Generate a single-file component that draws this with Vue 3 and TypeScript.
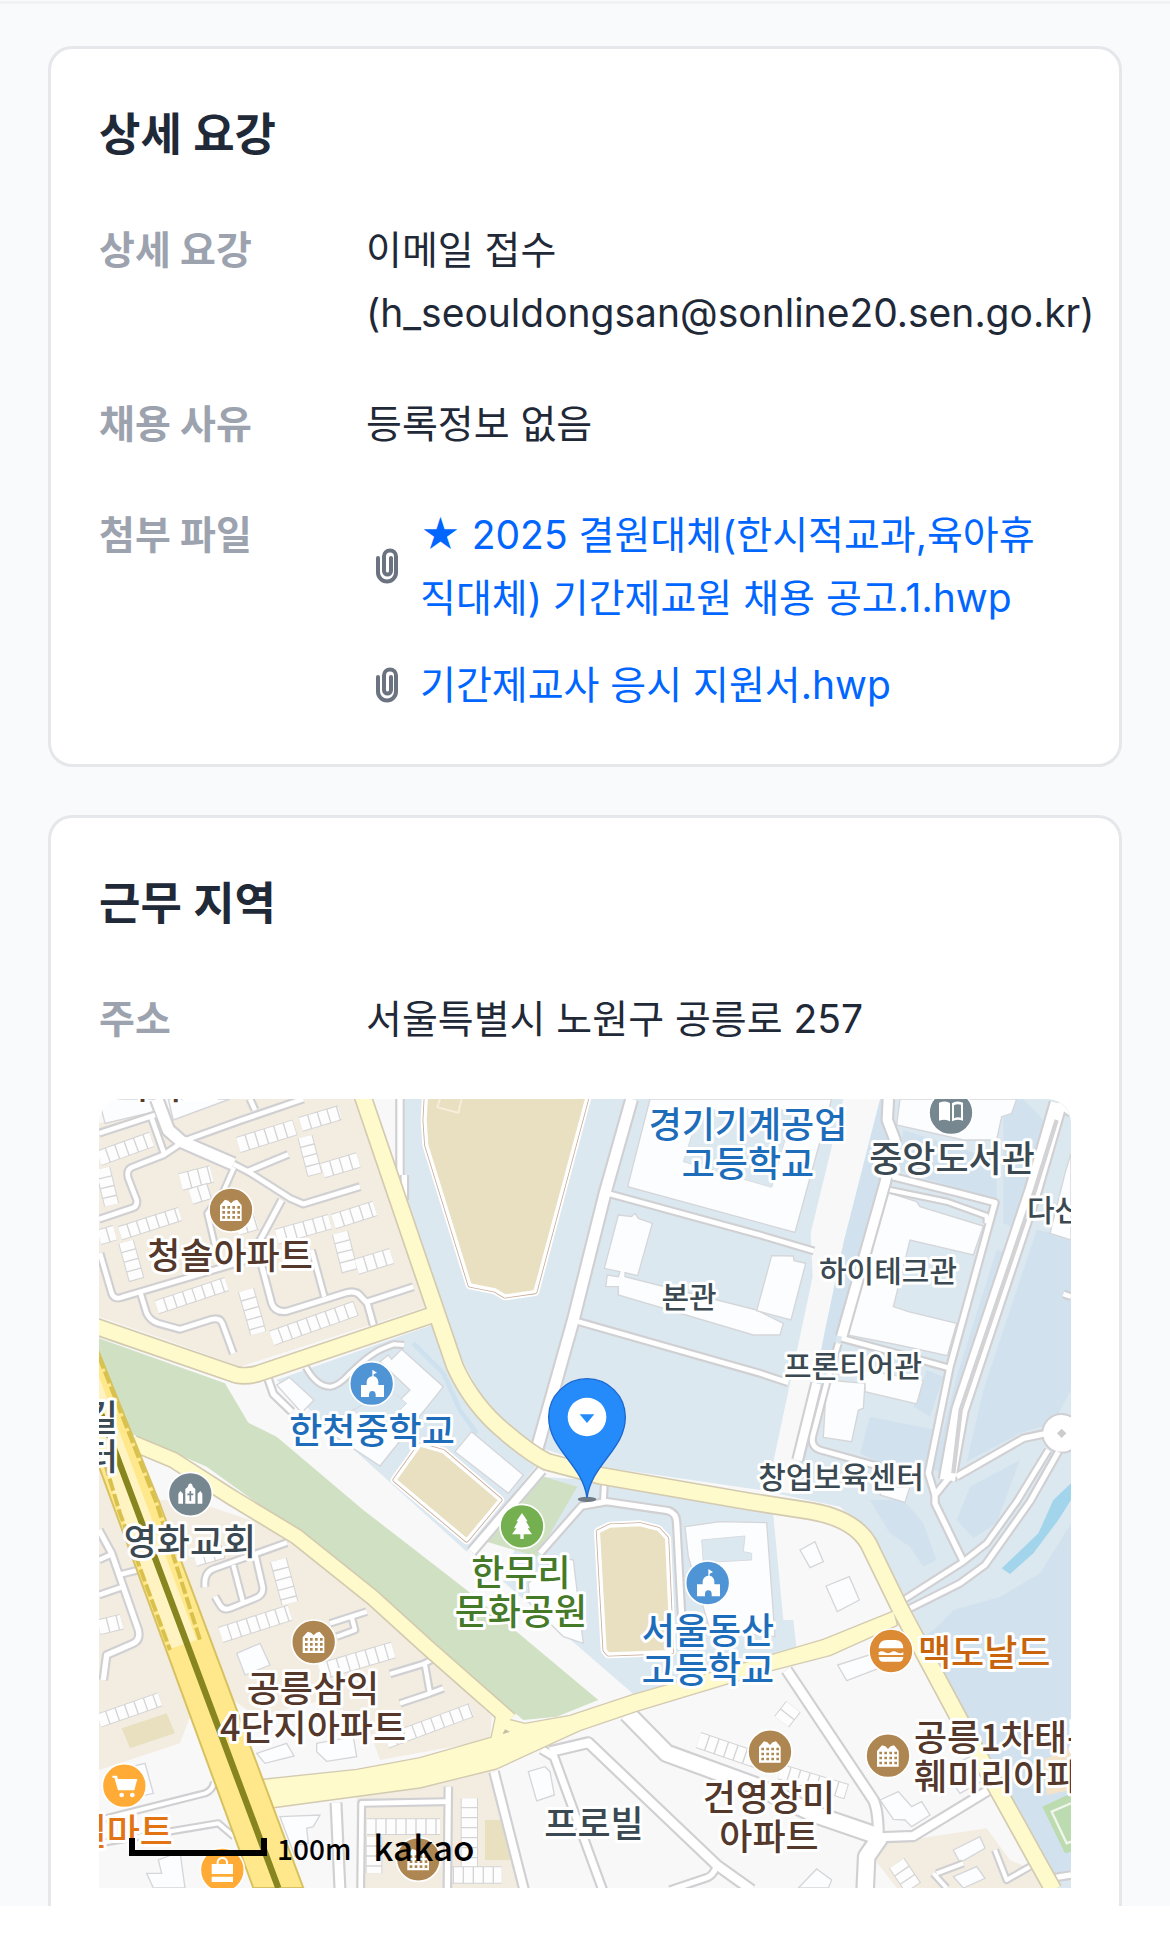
<script setup lang="ts">
type Road = { d: string; w: number }
type Poi = { kind: string; x: number; y: number; color: string }
type Label = { lines: string[]; x: number; y: number; tone: string; size?: 'small'; anchor?: 'start' | 'end' }

const files: string[] = [
  '★ 2025 결원대체(한시적교과,육아휴직대체) 기간제교원 채용 공고.1.hwp',
  '기간제교사 응시 지원서.hwp',
]

/* Minor streets, drawn with a grey casing under a white centre */
const roads: Road[] = [
  { d: 'M200 27L235 120L275 155L430 222', w: 34 },
  { d: 'M430 222L480 248L600 325L640 342L810 290', w: 14 },
  { d: 'M27 130L195 75', w: 14 },
  { d: 'M275 155L450 92L640 27', w: 14 },
  { d: 'M480 27L495 60', w: 14 },
  { d: 'M185 85L222 190', w: 14 },
  { d: 'M265 165L220 195L125 232Q108 240 115 265L140 330Q143 350 125 355L27 388', w: 14 },
  { d: 'M470 245L595 193', w: 14 },
  { d: 'M432 232L400 305L352 370L378 480', w: 12 },
  { d: 'M575 330L500 470L545 640Q555 668 590 664L770 608Q800 600 815 622L832 640L850 705', w: 15 },
  { d: 'M665 480L703 620', w: 13 },
  { d: 'M832 635L970 590', w: 14 },
  { d: 'M30 490L65 610Q72 630 95 622L480 508', w: 14 },
  { d: 'M150 605L170 670Q180 692 205 700L270 718L365 688Q390 682 397 700L430 790', w: 14 },
  { d: 'M930 27L930 255M943 255L943 330', w: 16 },
  { d: 'M535 868L550 912L605 965', w: 16 },
  { d: 'M648 832Q680 890 720 890Q745 888 775 855Q840 790 880 775L910 763L942 765', w: 12 },
  { d: 'M1355 1140L1145 1385', w: 24 },
  { d: 'M1350 1390L1475 1248L1550 1235L1735 1262Q1760 1270 1760 1300L1780 1675', w: 16 },
  { d: 'M1543 1180L1540 1240', w: 14 },
  { d: 'M1625 27L1545 310L1450 690L1340 1080', w: 32 },
  { d: 'M1560 312L2010 435L2172 483', w: 14 },
  { d: 'M1455 692L2010 850L2095 878', w: 14 },
  { d: 'M2395 27L2392 90L2415 150L2385 280L2255 740', w: 28 },
  { d: 'M2408 260L2600 308L2715 338L2580 830L2515 1150L2535 1215', w: 16 },
  { d: 'M2400 300L2570 335L2690 378L2690 400', w: 12 },
  { d: 'M2255 745L2420 790L2580 835', w: 14 },
  { d: 'M2245 760L2215 860L2168 1040Q2162 1070 2190 1080L2370 1130', w: 14 },
  { d: 'M2180 880L2123 1110', w: 26 },
  { d: 'M2905 40L2830 300L2610 960L2572 1170', w: 46 },
  { d: 'M2905 40L2943 70', w: 16 },
  { d: 'M2580 1160L2535 1215L2535 1240L2620 1415', w: 16 },
  { d: 'M2600 1160L2800 1045L2870 1030', w: 16 },
  { d: 'M2875 1080L2780 1235L2690 1360L2620 1415L2440 1530', w: 14 },
  { d: 'M2905 1085L2820 1235L2685 1425L2610 1480L2460 1555', w: 15 },
  { d: 'M2943 620L2920 612', w: 14 },
  { d: 'M1612 1870L1730 1990L1990 2085L2180 2175L2370 2240', w: 46 },
  { d: 'M2090 1740L2350 2130Q2365 2160 2365 2240', w: 26 },
  { d: 'M2365 2242L2470 2238L2700 2098', w: 24 },
  { d: 'M2370 2242L2330 2300L2325 2410', w: 46 },
  { d: 'M1212 2045L1305 2410', w: 22 },
  { d: 'M1355 1978L1392 2000L1538 2400', w: 20 },
  { d: 'M1380 1985L1495 1958L1880 2325L1985 2400', w: 26 },
  { d: 'M1880 2325Q1870 2360 1845 2365L1740 2400', w: 16 },
  { d: 'M738 2138L750 2400', w: 26 },
  { d: 'M1075 2090L1072 2400', w: 16 },
  { d: 'M812 2400L815 2140L1070 2135', w: 14 },
  { d: 'M590 1358L375 1435Q340 1445 345 1492', w: 14 },
  { d: 'M430 1425L460 1540', w: 13 },
  { d: 'M495 1390L518 1490Q522 1515 495 1525L420 1555Q400 1562 390 1545L375 1520', w: 14 },
  { d: 'M27 1320L65 1390L145 1620Q152 1650 130 1660L50 1695L40 1770', w: 16 },
  { d: 'M27 1515L100 1490M85 1455L145 1440M27 1410L60 1395', w: 14 },
  { d: 'M830 1565L720 1600M785 1580L795 1620L740 1640', w: 13 },
  { d: 'M900 1752L1000 1722L1045 1700M1005 1725L1020 1810L1060 1795M1020 1810L930 1840', w: 13 },
  { d: 'M27 2190L345 2110Q370 2100 372 2075', w: 12 },
  { d: 'M27 2260L385 2200L432 2240', w: 12 },
  { d: 'M2715 2280L2750 2370L2820 2330M2540 2350L2620 2320M2530 2350L2570 2394', w: 12 },
  { d: 'M2943 2355L2880 2365', w: 16 },
]

/* Rows of apartment units */
const rows: Road[] = [
  { d: 'M445 165L615 112', w: 44 },
  { d: 'M632 103L750 68', w: 40 },
  { d: 'M645 140L675 255', w: 40 },
  { d: 'M698 242L805 210', w: 42 },
  { d: 'M27 205L185 148', w: 42 },
  { d: 'M38 235L65 345', w: 40 },
  { d: 'M90 430L270 372', w: 38 },
  { d: 'M108 455L140 570', w: 42 },
  { d: 'M27 442L75 428', w: 42 },
  { d: 'M560 440L720 395', w: 42 },
  { d: 'M730 395L855 355', w: 42 },
  { d: 'M750 428L780 545', w: 44 },
  { d: 'M800 530L905 498', w: 44 },
  { d: 'M200 652L410 582', w: 38 },
  { d: 'M468 600L505 730', w: 44 },
  { d: 'M545 745L798 655', w: 42 },
  { d: 'M272 276L365 252', w: 48 },
  { d: 'M302 320L360 302', w: 44 },
  { d: 'M440 410L500 392', w: 50 },
  { d: 'M565 1410L600 1540', w: 46 },
  { d: 'M392 1635L600 1568', w: 44 },
  { d: 'M27 1612L95 1595', w: 42 },
  { d: 'M27 1892L210 1828', w: 38 },
  { d: 'M690 1745L910 1680', w: 46 },
  { d: 'M315 1410L400 1385', w: 36 },
  { d: 'M890 1955L1145 1860', w: 38 },
  { d: 'M1825 1950L2000 2010', w: 44 },
  { d: 'M2070 2045L2270 2105', w: 42 },
  { d: 'M2075 1895L2110 1850', w: 50 },
  { d: 'M1138 2125L1138 2330', w: 46 },
  { d: 'M1062 2355L1235 2355', w: 46 },
  { d: 'M830 2210L1050 2210', w: 44 },
  { d: 'M852 2240L852 2350', w: 44 },
  { d: 'M2420 2320L2470 2394', w: 50 },
]

/* Free-standing buildings */
const buildings: string[] = [
  'M27 27H200L215 60L45 100ZM235 27H420L250 90Z',
  'M560 885L598 862L672 930L635 968Z',
  'M935 778L1060 890L870 1128L690 1010L850 930L900 960L960 900L870 815L895 795L905 808Z',
  'M1145 1025L1300 1155L1255 1210L1095 1085Z',
  'M1680 27L1613 290L2115 427L2225 27Z',
  'M1585 375L1625 380L1635 370L1645 385L1687 400L1643 557L1605 548V560L2000 660L2080 700L2070 735L1990 735L1585 615V590L1547 590L1552 555L1585 560L1590 545L1543 535Z',
  'M2045 497L2110 498L2112 512L2147 520L2103 690L2000 662Z',
  'M2385 305L2480 335L2490 350L2680 408L2650 495L2460 450L2410 650L2455 665L2600 700L2572 797L2425 765L2272 735Z',
  'M2430 27H2780L2765 70L2735 80L2720 150L2620 150L2420 105Z',
  'M2210 870L2325 880L2320 955L2305 960L2285 1055L2200 1042Z',
  'M2325 840L2500 872L2480 942L2325 905Z',
  'M2380 1195L2460 1190L2445 1237L2370 1215Z',
  'M2925 250L2943 190V450L2880 430Z',
  'M1785 1310L1890 1295L2030 1298L2055 1640L1860 1620L1795 1400Z',
  'M1400 1400L1450 1410L1480 1660L1420 1640L1320 1540L1315 1480Z',
  'M440 1690L510 1660L540 1725L465 1755Z',
  'M500 1990L590 1960L612 1998L525 2020ZM680 1960L790 1940L800 2000L710 2014L680 1985Z',
  'M85 2040L165 2020L190 2110L110 2128Z',
  'M570 2180L690 2175L670 2210L650 2215L655 2260L620 2265L615 2300Z',
  'M170 2350L215 2350L205 2310L270 2285L285 2394H190Z',
  'M1315 2045L1365 2030L1380 2045L1393 2115L1340 2133Z',
  'M2130 1380L2175 1355L2200 1415L2160 1433Z',
  'M2208 1488L2278 1460L2308 1530L2242 1565Z',
  'M2243 1725L2360 1688L2380 1730L2270 1772Z',
  'M2370 2130L2425 2105L2465 2150L2495 2135L2520 2175L2465 2210L2445 2190L2410 2188Z',
  'M2560 2040L2660 1990L2700 2060L2610 2110Z',
  'M2590 2280L2670 2240L2685 2275L2610 2318ZM2590 2360L2660 2330L2685 2365L2620 2394Z',
  'M2125 2394L2180 2337L2225 2370L2215 2394Z',
]

const pois: Poi[] = [
  { kind: 'home', x: 423, y: 360, color: '#ae8651' },
  { kind: 'school', x: 845, y: 881, color: '#4f94d4' },
  { kind: 'book', x: 2583, y: 68, color: '#77878f' },
  { kind: 'church', x: 301, y: 1213, color: '#77878f' },
  { kind: 'tree', x: 1296, y: 1309, color: '#74b04f' },
  { kind: 'school', x: 1853, y: 1479, color: '#4f94d4' },
  { kind: 'home', x: 671, y: 1656, color: '#ae8651' },
  { kind: 'burger', x: 2403, y: 1683, color: '#dc8b34' },
  { kind: 'home', x: 2040, y: 1985, color: '#ae8651' },
  { kind: 'home', x: 2394, y: 1997, color: '#ae8651' },
  { kind: 'cart', x: 103, y: 2087, color: '#ffab35' },
  { kind: 'bag', x: 397, y: 2340, color: '#ffab35' },
  { kind: 'home', x: 985, y: 2308, color: '#ae8651' },
]

const labels: Label[] = [
  { lines: ['아파트'], x: 68, y: 0, tone: 'brown' },
  { lines: ['청솔아파트'], x: 131, y: 170, tone: 'brown' },
  { lines: ['한천중학교'], x: 273, y: 345, tone: 'blue' },
  { lines: ['경기기계공업', '고등학교'], x: 649, y: 39, tone: 'blue' },
  { lines: ['중앙도서관'], x: 853, y: 73, tone: 'slate' },
  { lines: ['다산관'], x: 928, y: 122, tone: 'slate', size: 'small', anchor: 'start' },
  { lines: ['하이테크관'], x: 789, y: 183, tone: 'slate', size: 'small' },
  { lines: ['본관'], x: 590, y: 209, tone: 'slate', size: 'small' },
  { lines: ['프론티어관'], x: 754, y: 278, tone: 'slate', size: 'small' },
  { lines: ['창업보육센터'], x: 742, y: 389, tone: 'slate', size: 'small' },
  { lines: ['길', '터'], x: 19, y: 332, tone: 'slate', anchor: 'end' },
  { lines: ['영화교회'], x: 91, y: 456, tone: 'slate' },
  { lines: ['한무리', '문화공원'], x: 422, y: 487, tone: 'green' },
  { lines: ['서울동산', '고등학교'], x: 609, y: 545, tone: 'blue' },
  { lines: ['맥도날드'], x: 819, y: 567, tone: 'orange', anchor: 'start' },
  { lines: ['공릉삼익', '4단지아파트'], x: 214, y: 603, tone: 'brown' },
  { lines: ['공릉1차태릉', '훼미리아파트'], x: 815, y: 652, tone: 'brown', anchor: 'start' },
  { lines: ['건영장미', '아파트'], x: 670, y: 712, tone: 'brown' },
  { lines: ['프로빌'], x: 495, y: 738, tone: 'slate' },
  { lines: ['일마트'], x: 74, y: 746, tone: 'amber', anchor: 'end' },
]
</script>

<template>
  <main class="page">
    <div class="cards">
      <section class="card">
        <h2 class="title">상세 요강</h2>
        <dl class="rows">
          <div class="row">
            <dt>상세 요강</dt>
            <dd>이메일 접수<br />(h_seouldongsan@sonline20.sen.go.kr)</dd>
          </div>
          <div class="row">
            <dt>채용 사유</dt>
            <dd>등록정보 없음</dd>
          </div>
          <div class="row">
            <dt>첨부 파일</dt>
            <dd class="files">
              <a v-for="file in files" :key="file" class="file" href="#">
                <svg class="clip" viewBox="0 0 42 42" aria-hidden="true">
                  <path d="M12 13v14.500a9 9 0 0 0 18 0V11.500a6 6 0 0 0-12 0V26a3.500 3.500 0 0 0 7 0V13" />
                </svg>
                <span>{{ file }}</span>
              </a>
            </dd>
          </div>
        </dl>
      </section>

      <section class="card last">
        <h2 class="title">근무 지역</h2>
        <dl class="rows">
          <div class="row">
            <dt>주소</dt>
            <dd>서울특별시 노원구 공릉로 257</dd>
          </div>
        </dl>
        <div class="map">
          <svg class="canvas" viewBox="0 0 972 789" preserveAspectRatio="xMidYMid slice" role="img" aria-label="지도">
            <g transform="translate(-9 -9) scale(0.333333)">
              <rect x="27" y="27" width="2916" height="2367" fill="#f8f8f8" />

              <g fill="#f3ece1">
                <path d="M27 100L200 60L420 27H790L1010 650L450 830L230 750L27 680Z" />
                <path d="M27 1110L300 1880L270 1960L27 2040Z" />
                <path d="M205 1230L300 1230L600 1330L1010 1690L1205 1880L1200 1950L870 2010L830 1900L700 1830L500 1880L430 1830Z" />
                <path d="M800 2120L1200 2040L1290 2394H800Z" />
                <path d="M2390 2260L2690 2215L2760 2310L2830 2340L2870 2394H2420L2355 2310Z" />
              </g>

              <path
                fill="#d0e1c3"
                d="M27 745L405 880L475 998L560 1040L820 1260L1130 1500L1525 1830L1400 1880L1300 1890L620 1325L350 1130L120 1030L27 790Z"
              />

              <g fill="#dce8f0">
                <path d="M945 27V330L1000 490L1090 760L1170 910L1250 1000L1340 1070L1530 1130L2010 1200L2250 1250L2340 1330L2450 1530L2680 1980L2900 2394H2943V27Z" />
                <path d="M560 870L1040 700L1110 890L1200 1020L1340 1125L1130 1385Z" />
                <path d="M1350 1160L1500 1170L2010 1255L2050 1275L2080 1590L2110 1590L2120 1680L1630 1812L1240 1475Z" />
              </g>

              <g fill="#d1e2ee">
                <path d="M2370 27H2400L2415 180L2370 290L2240 740L2120 1200L2080 1200L2250 500Z" />
                <path d="M2440 120L2720 210V330L2420 240ZM2740 27L2800 27L2860 90L2790 420L2740 400Z" />
                <path d="M2840 420L2943 440V900L2890 1000L2790 1030L2630 1115L2680 900Z" />
                <path d="M2720 480L2760 490L2620 900L2560 1150L2530 1140L2600 860Z" />
                <path d="M2340 980L2540 1020L2500 1180L2310 1090ZM2510 840L2560 860L2520 980L2470 950Z" />
                <path d="M2340 1230L2440 1230L2500 1300L2540 1410L2500 1430L2460 1370L2400 1330Z" />
                <path d="M2640 1190L2790 1110L2720 1300L2650 1345L2600 1290Z" />
                <path d="M2943 1300L2850 1450L2730 1520L2590 1560L2530 1620L2500 1640L2680 1980L2890 2350L2943 2340Z" />
              </g>
              <path fill="none" stroke="#cde2ee" stroke-width="14" d="M970 760L1060 850L1110 960L1160 1030" />

              <path fill="#f8f8f8" d="M2260 27H2370L2262 450L2205 720L2110 1212L2032 1200L2168 560L2162 430Z" />
              <path fill="#a2d5eb" d="M2943 1180L2890 1230L2845 1330L2735 1435L2760 1452L2830 1390L2905 1290L2943 1230Z" />
              <path fill="#d0e1c3" d="M1362 1160L1462 1190L1340 1400L1190 1355Z" />
              <path fill="#e9e0bf" d="M95 1915L230 1870L255 1930L120 1975ZM1185 2190L1260 2190V2310H1185Z" />
              <path fill="#f3e4c9" d="M2860 2010L2943 1970V2100L2870 2115Z" />
              <path fill="#bcdbb0" d="M2857 2150L2943 2110V2285L2925 2290Z" />
              <path fill="none" stroke="#f0f6ec" stroke-width="7" d="M2943 2140L2885 2165L2930 2260L2943 2255" />

              <g stroke="#d5d6d9" stroke-width="4" fill="#fcfdff">
                <path v-for="shape in buildings" :key="shape" :d="shape" />
              </g>
              <g fill="#dce8f0" stroke="#d8dce0" stroke-width="3">
                <path d="M1830 60L1780 215L2045 292L2110 60Z" />
                <path d="M1835 1350L1965 1338L1960 1385L1985 1390V1410L1840 1418Z" />
                <path d="M790 960L900 900L950 940L860 1030Z" />
              </g>

              <g v-for="line in rows" :key="line.d" fill="none">
                <path :d="line.d" stroke="#d4d4d4" :stroke-width="line.w + 6" />
                <path :d="line.d" stroke="#fdfdfd" :stroke-width="line.w" stroke-dasharray="26 4" />
              </g>

              <g fill="none" stroke-linejoin="round">
                <path v-for="road in roads" :key="'c' + road.d" :d="road.d" stroke="#d0d0d3" :stroke-width="road.w + 13" />
                <circle cx="2915" cy="1030" r="58" fill="#fff" stroke="#d0d0d3" stroke-width="6" />
                <path v-for="road in roads" :key="'f' + road.d" :d="road.d" stroke="#fff" :stroke-width="road.w" />
                <path d="M2900 90L2835 300L2612 960L2590 1150" stroke="#d3d3d6" stroke-width="13" />
                <path d="M2915 1016L2929 1030L2915 1044L2901 1030Z" fill="#ccc" />
              </g>

              <g stroke-linejoin="round">
                <g v-for="w in [26, 15, 10]" :key="w" fill="#e9dfc1" :stroke="w === 15 ? '#c9ad9b' : '#fff'" :stroke-width="w">
                  <path d="M1010 0H1497L1335 605L1245 618L1215 600L1140 585L1010 165L1005 90Z" />
                  <path d="M990 1065L1060 1085L1230 1230L1130 1350L915 1170Z" />
                  <path d="M1525 1325L1560 1308L1650 1304L1705 1318L1730 1345L1745 1685L1555 1692L1545 1680Z" />
                </g>
                <path d="M1050 27L1042 52L1105 68L1115 27" fill="none" stroke="#f5eedb" stroke-width="6" />
              </g>

              <g fill="none" stroke-linejoin="round">
                <g v-for="pass in [0, 1]" :key="pass" :stroke="pass ? '#fefacb' : '#d3cab0'">
                  <path d="M130 1060L250 1110L430 1225L620 1340L845 1520L1010 1670L1260 1890" :stroke-width="pass ? 42 : 52" />
                  <path d="M10 707L440 855Q470 860 500 852L1035 672" :stroke-width="pass ? 44 : 54" />
                  <path
                    d="M815 10L1035 655L1095 830Q1150 950 1250 1030Q1320 1090 1370 1115L1530 1157L1980 1235L2160 1263Q2290 1285 2335 1360L2430 1555L2660 1985L2890 2400"
                    :stroke-width="pass ? 46 : 56"
                  />
                  <path
                    d="M480 2074L800 2040L990 2005L1205 1943L1218 1880L1305 1902L1440 1878L1630 1815L1980 1715L2200 1650L2410 1565L2420 1605L2220 1695L2045 1740L1640 1862L1470 1920L1220 2035L990 2092L545 2152L480 2160Z"
                    :fill="pass ? '#fefacb' : '#d3cab0'"
                    :stroke-width="pass ? 0 : 8"
                  />
                </g>
                <path d="M1238 1932L1245 1918L1260 1925L1240 1932Z" fill="#c7bea5" />
              </g>

              <path d="M10 745L205 1230L640 2394H490L27 1130Z" fill="#ffe88b" stroke="#d8c161" stroke-width="6" />
              <path d="M27 860L320 1650L245 1675L27 1090Z" fill="#fff3c2" />
              <g fill="none" stroke="#d9c14e">
                <path d="M27 800L200 1240L330 1650" stroke-width="12" stroke-dasharray="38 10" />
                <path d="M45 1120L90 1270L240 1680" stroke-width="12" stroke-dasharray="38 10" />
              </g>
              <path d="M27 955L130 1230L565 2394" fill="none" stroke="#87851f" stroke-width="19" />

              <g v-for="poi in pois" :key="`${poi.x}-${poi.y}`" :transform="`translate(${poi.x} ${poi.y})`">
                <circle r="66" :fill="poi.color" stroke="#fff" stroke-width="5" />
                <g v-if="poi.kind === 'home'">
                  <path d="M-33 33V-14L-18-31L-8-28L0-20L8-28L18-31L32-14V33Z" fill="#fff" />
                  <path d="M-26-8H28M-26 7H28M-26 22H28" :stroke="poi.color" stroke-width="8" stroke-dasharray="8 7" />
                </g>
                <g v-else-if="poi.kind === 'school'" fill="#fff">
                  <path d="M2-42L16-33L6-28V-22Q18-20 20-6V4H37V40H12V32Q11 22 2 22T-8 32V40H-32V4H-15V-6Q-13-20 2-22Z" />
                </g>
                <g v-else-if="poi.kind === 'book'" fill="#fff">
                  <path d="M-36-30Q-14-38-3-28V26Q-16 18-36 24Z" />
                  <path d="M3-28Q14-38 36-30V24Q16 18 3 26Z" />
                  <path d="M9-22Q18-28 30-24V15Q18 12 9 17Z" :fill="poi.color" />
                </g>
                <g v-else-if="poi.kind === 'church'" fill="#fff">
                  <path d="M-15 28V-16L-8-22Q-6-32 0-33Q6-32 8-22L15-16V28Z" />
                  <path d="M-36 28V-2L-30-10L-22-2V28ZM36 28V-2L30-10L22-2V28Z" />
                  <path d="M0-10V20M-9 0H9" :stroke="poi.color" stroke-width="5" />
                </g>
                <path v-else-if="poi.kind === 'tree'" fill="#fff" d="M0-40L17-15H12L24 6H17L30 24H5V38H-5V24H-30L-17 6H-24L-12-15H-17Z" />
                <g v-else-if="poi.kind === 'burger'" fill="#fff">
                  <path d="M-37-8Q-36-33-12-33H12Q36-33 37-8Z" />
                  <path d="M-37 4Q-28-2-18 4T0 4T18 4T37 4V12H-37Z" />
                  <path d="M-37 18H37Q36 32 24 32H-24Q-36 32-37 18Z" />
                </g>
                <g v-else-if="poi.kind === 'cart'" fill="#fff">
                  <path d="M-36-30H-22L-19-20H39L30 14H-19L-30-24H-36Z" />
                  <circle cx="-8" cy="28" r="7" />
                  <circle cx="24" cy="28" r="7" />
                </g>
                <g v-else fill="#fff">
                  <path d="M-32-18H32V12H-32ZM-32 20H32V36H-32Z" />
                  <path d="M-14-18V-24Q-12-36 0-36T14-24V-18" fill="none" stroke="#fff" stroke-width="6" />
                </g>
              </g>
            </g>

            <g class="labels">
              <text
                v-for="label in labels"
                :key="`${label.x}-${label.y}`"
                :y="label.y"
                :class="[label.tone, label.size, label.anchor]"
              ><tspan v-for="(line, i) in label.lines" :key="line" :x="label.x" :dy="i * 39">{{ line }}</tspan></text>
            </g>

            <g transform="translate(488 318) scale(0.333333)">
              <ellipse cx="0" cy="247" rx="28" ry="8" fill="#4c5a66" opacity="0.75" />
              <path d="M0 242C-14 140-115 98-115 0A115 115 0 0 1 115 0C115 98 14 140 0 242Z" fill="#258bfa" stroke="#1b68cf" stroke-width="4" />
              <circle r="58" fill="#fff" />
              <path d="M-22-8H22L0 18Z" fill="#258bfa" />
            </g>
          </svg>
          <div class="legend">
            <span class="scale" aria-hidden="true"></span>
            <span class="distance">100m</span>
            <a class="brand" href="#">kakao</a>
          </div>
        </div>
      </section>
    </div>
    <footer class="bottom"></footer>
  </main>
</template>

<style>
body {
  margin: 0;
  background: #ffffff;
}
</style>

<style scoped>
.page {
  padding-top: 1px;
  background: #f9fafc;
  color: #1f2937;
  font-family: Inter, "Noto Sans CJK KR", sans-serif;
  overflow: hidden;
}

.cards {
  display: flex;
  flex-direction: column;
  gap: 48px;
  padding: 42px 48px 0;
  border-top: 3px solid #f1f2f5;
}

.card {
  padding: 48px;
  border: 3px solid #e5e7eb;
  border-radius: 24px;
  background: #ffffff;
}

.last {
  padding-bottom: 18px;
  border-bottom: 0;
  border-radius: 24px 24px 0 0;
}

.title {
  margin: 0 0 45px;
  font-size: 45px;
  line-height: 76px;
  font-weight: 600;
}

.rows {
  display: flex;
  flex-direction: column;
  gap: 48px;
  margin: 0;
}

.row {
  display: flex;
  gap: 24px;
  font-size: 39px;
  line-height: 63px;
}

dt {
  flex: 0 0 243px;
  color: #9ca3af;
  font-weight: 700;
}

dd {
  flex: 1;
  min-width: 0;
  margin: 0;
}

.files {
  display: flex;
  flex-direction: column;
  gap: 24px;
}

.file {
  display: flex;
  align-items: center;
  gap: 12px;
  color: #0066ff;
  text-decoration: none;
}

/* Narrow enough that the long file name breaks inside its last column */
.file span {
  padding-right: 20px;
}

.clip {
  flex: none;
  width: 42px;
  height: 42px;
  fill: none;
  stroke: #6b7280;
  stroke-width: 4;
  stroke-linecap: round;
}

.map {
  position: relative;
  margin-top: 49px;
  border-radius: 24px 24px 0 0;
  overflow: hidden;
}

.canvas {
  display: block;
  width: 100%;
  height: 789px;
}

.labels text {
  font-family: "Noto Sans CJK KR", sans-serif;
  font-size: 36px;
  font-weight: 500;
  text-anchor: middle;
  paint-order: stroke;
  stroke: #ffffff;
  stroke-width: 6px;
  stroke-linejoin: round;
}

.labels .small {
  font-size: 30px;
}

.labels .start {
  text-anchor: start;
}

.labels .end {
  text-anchor: end;
}

.brown {
  fill: #53382b;
}

.blue {
  fill: #1d6dbb;
}

.slate {
  fill: #3b4a52;
}

.green {
  fill: #457a29;
}

.orange {
  fill: #c8650c;
}

.amber {
  fill: #e27414;
}

.legend {
  position: absolute;
  left: 30px;
  bottom: 20px;
  display: flex;
  align-items: flex-end;
  color: #000000;
  font-family: "Noto Sans CJK KR", sans-serif;
  font-weight: 500;
}

.scale {
  width: 126px;
  height: 12px;
  margin: 0 10px 12px 0;
  border: 6px solid #000000;
  border-top: 0;
}

.distance {
  margin-right: 22px;
  font-size: 28px;
  line-height: 40px;
}

.brand {
  color: #000000;
  font-size: 35px;
  line-height: 44px;
  text-decoration: none;
}

.bottom {
  height: 36px;
  background: #ffffff;
}
</style>
